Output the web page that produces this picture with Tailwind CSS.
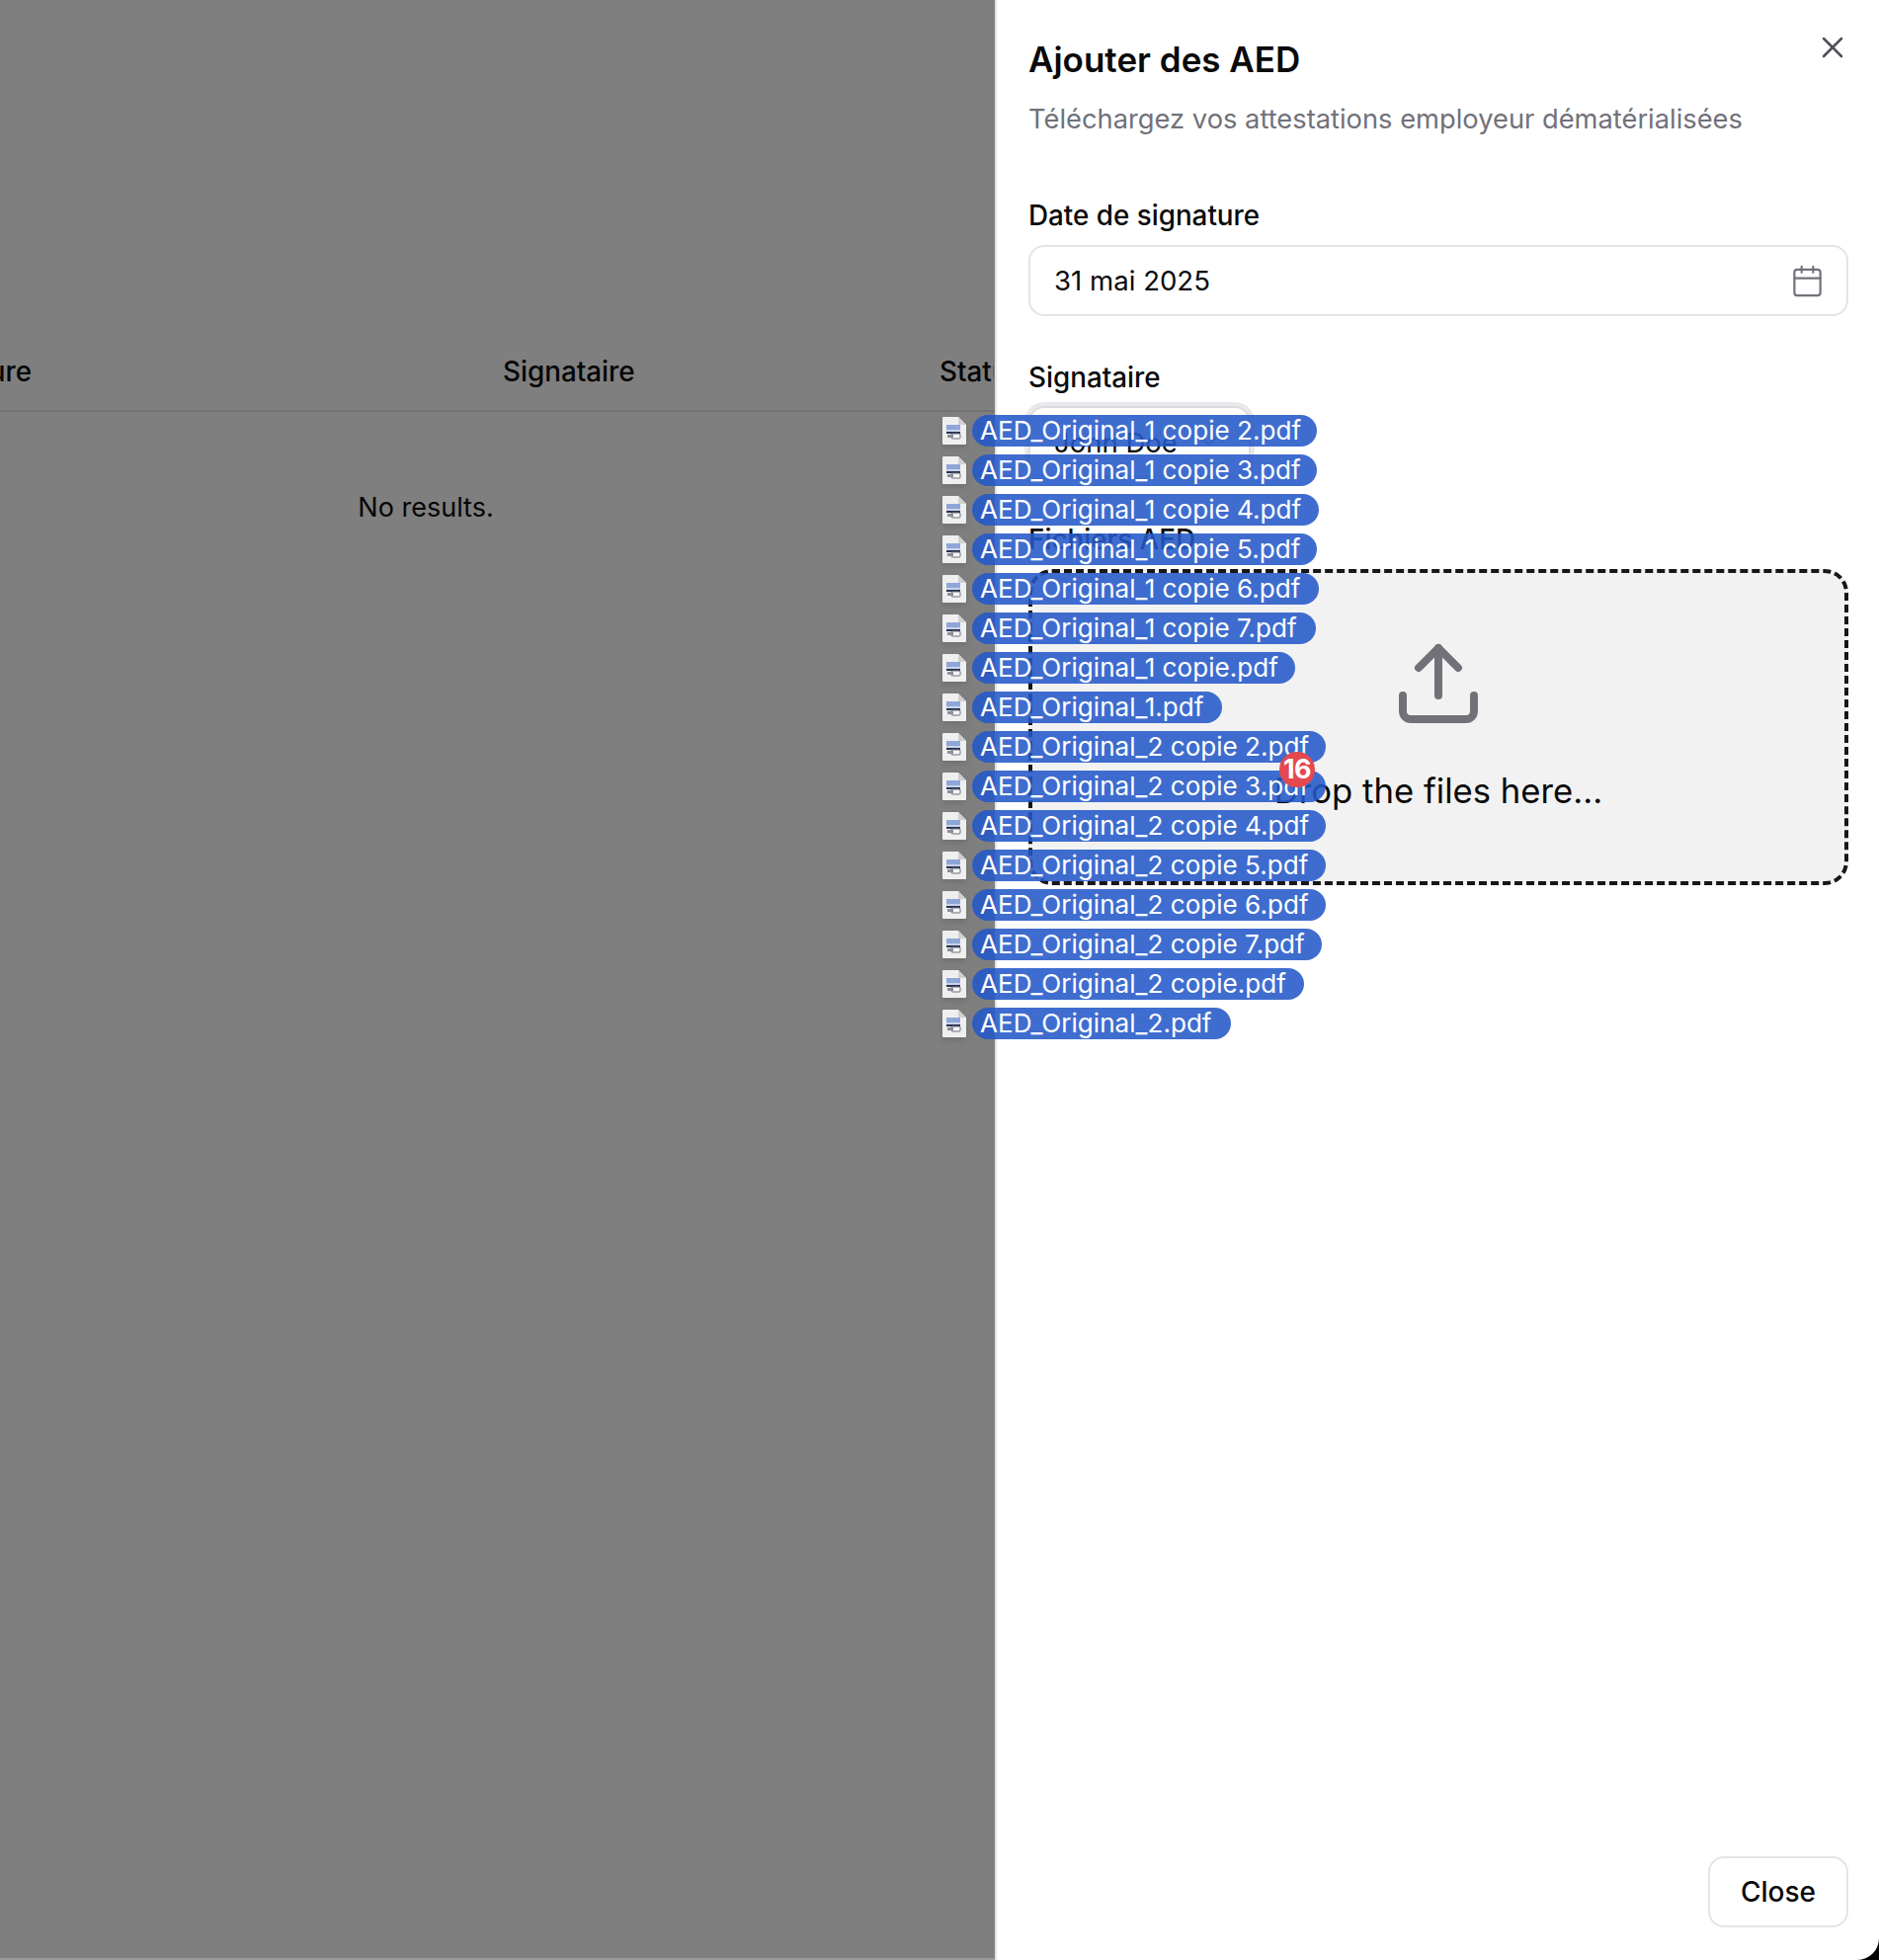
<!DOCTYPE html>
<html lang="fr">
<head>
<meta charset="utf-8">
<title>Ajouter des AED</title>
<script src="https://cdn.jsdelivr.net/npm/@tailwindcss/browser@4"></script>
</head>
<body class="font-['Inter','Liberation_Sans',sans-serif] bg-white">
<div class="relative w-[1902px] h-[1984px] overflow-hidden bg-[#7f7f7f] text-[#050505]">
  <!-- background table -->
  <div class="flex w-[1007px] h-[417px] items-end border-b-2 border-[#737373] pb-[23px] text-[27.8px] leading-[32px] font-medium whitespace-nowrap">
    <span class="w-[509px] shrink-0 -indent-[202px]">Date de signature</span>
    <span class="w-[442px] shrink-0">Signataire</span>
    <span class="w-[55px] shrink-0 overflow-hidden">Statut</span>
  </div>
  <div class="w-[862px] pt-[80px] text-center text-[27px] leading-[34px]">No results.</div>
  <div class="absolute left-0 bottom-0 w-[1007px] h-[2px] bg-[#9a9a9a]"></div>

  <!-- drawer -->
  <div class="absolute top-0 right-0 bottom-0 w-[895px] bg-white border-l-2 border-[#e4e4e7] flex flex-col pl-[32px] pr-[31px] text-[#0a0a0a]">
    <svg class="absolute top-[30px] right-[29px]" width="36" height="36" viewBox="0 0 24 24" fill="none" stroke="#4f4f55" stroke-width="1.7" stroke-linecap="round" stroke-linejoin="round"><path d="M18 6 6 18"/><path d="m6 6 12 12"/></svg>
    <h2 class="mt-[39px] text-[35px] leading-[42px] font-semibold">Ajouter des AED</h2>
    <p class="mt-[22px] text-[27.3px] leading-[36px] text-[#71717a]">Téléchargez vos attestations employeur dématérialisées</p>
    <label class="mt-[61px] text-[27.8px] leading-[36px] font-medium">Date de signature</label>
    <div class="mt-[12px] h-[72px] shrink-0 border-2 border-[#e4e4e7] rounded-[16px] flex items-center justify-between pl-[24px] pr-[22px]">
      <span class="text-[27.6px] pt-[1px]">31 mai 2025</span>
      <svg width="35" height="35" viewBox="0 0 24 24" fill="none" stroke="#71717a" stroke-width="1.5" stroke-linecap="round" stroke-linejoin="round"><path d="M8 2v4"/><path d="M16 2v4"/><rect width="18" height="18" x="3" y="4" rx="2"/><path d="M3 10h18"/></svg>
    </div>
    <label class="mt-[44px] text-[27.8px] leading-[36px] font-medium">Signataire</label>
    <div class="mt-[11px] w-[225px] h-[72px] shrink-0 border-2 border-[#dcdce0] rounded-[16px] ring-[4px] ring-[#e9e9ec] flex items-center justify-between pl-[24px] pr-[28px]">
      <span class="text-[27.5px] pt-[4px]">John Doe</span>
      <svg width="24" height="24" viewBox="0 0 24 24" fill="none" stroke="#a1a1aa" stroke-width="2" stroke-linecap="round" stroke-linejoin="round"><path d="m6 9 6 6 6-6"/></svg>
    </div>
    <label class="mt-[45px] text-[27.8px] leading-[36px] font-medium">Fichiers AED</label>
    <div class="mt-[12px] h-[320px] shrink-0 border-[4px] border-dashed border-[#171717] rounded-[24px] bg-[#f2f2f2] flex flex-col items-center pt-[64px]">
      <svg width="96" height="96" viewBox="0 0 24 24" fill="none" stroke="#71717a" stroke-width="2" stroke-linecap="round" stroke-linejoin="round"><path d="M21 15v4a2 2 0 0 1-2 2H5a2 2 0 0 1-2-2v-4"/><polyline points="17 8 12 3 7 8"/><line x1="12" x2="12" y1="3" y2="15"/></svg>
      <p class="mt-[38px] text-[34.7px] leading-[44px]">Drop the files here...</p>
    </div>
    <button class="mt-auto mb-[33px] self-end w-[142px] h-[72px] border-2 border-[#e4e4e7] rounded-[16px] bg-white text-[28px] font-medium">Close</button>
  </div>
  <div class="absolute right-0 bottom-0 w-[22px] h-[22px] bg-black [clip-path:path('M22_0A22_22_0_0_1_0_22H22Z')]"></div>

  <!-- drag ghost -->
  <div class="absolute left-[954px] top-[420px] flex flex-col gap-[8px] text-white text-[26.1px] leading-[31px]">
    <div class="flex items-center h-[32px]"><svg class="mr-[6px] drop-shadow-md" width="24" height="28" viewBox="0 0 24 28"><path d="M1 0h15l8 8v19a1 1 0 0 1-1 1H1a1 1 0 0 1-1-1V1a1 1 0 0 1 1-1z" fill="#efefef"/><path d="M16 0l8 8h-8z" fill="#d0d0d0"/><rect x="4" y="8" width="14" height="5" fill="#8fa6d8"/><rect x="4" y="13" width="14" height="2" fill="#c9d4ec"/><rect x="4" y="15" width="14" height="2" fill="#2a3350"/><rect x="9" y="17" width="9" height="5" rx="1" fill="#f5f5f5" stroke="#6b7080"/><rect x="5" y="18" width="6" height="3" fill="#8a8f99"/></svg><div class="w-[349px] h-[32px] rounded-full bg-[#2459c8]/88 pl-[8px] whitespace-nowrap">AED_Original_1 copie 2.pdf</div></div>
    <div class="flex items-center h-[32px]"><svg class="mr-[6px] drop-shadow-md" width="24" height="28" viewBox="0 0 24 28"><path d="M1 0h15l8 8v19a1 1 0 0 1-1 1H1a1 1 0 0 1-1-1V1a1 1 0 0 1 1-1z" fill="#efefef"/><path d="M16 0l8 8h-8z" fill="#d0d0d0"/><rect x="4" y="8" width="14" height="5" fill="#8fa6d8"/><rect x="4" y="13" width="14" height="2" fill="#c9d4ec"/><rect x="4" y="15" width="14" height="2" fill="#2a3350"/><rect x="9" y="17" width="9" height="5" rx="1" fill="#f5f5f5" stroke="#6b7080"/><rect x="5" y="18" width="6" height="3" fill="#8a8f99"/></svg><div class="w-[349px] h-[32px] rounded-full bg-[#2459c8]/88 pl-[8px] whitespace-nowrap">AED_Original_1 copie 3.pdf</div></div>
    <div class="flex items-center h-[32px]"><svg class="mr-[6px] drop-shadow-md" width="24" height="28" viewBox="0 0 24 28"><path d="M1 0h15l8 8v19a1 1 0 0 1-1 1H1a1 1 0 0 1-1-1V1a1 1 0 0 1 1-1z" fill="#efefef"/><path d="M16 0l8 8h-8z" fill="#d0d0d0"/><rect x="4" y="8" width="14" height="5" fill="#8fa6d8"/><rect x="4" y="13" width="14" height="2" fill="#c9d4ec"/><rect x="4" y="15" width="14" height="2" fill="#2a3350"/><rect x="9" y="17" width="9" height="5" rx="1" fill="#f5f5f5" stroke="#6b7080"/><rect x="5" y="18" width="6" height="3" fill="#8a8f99"/></svg><div class="w-[351px] h-[32px] rounded-full bg-[#2459c8]/88 pl-[8px] whitespace-nowrap">AED_Original_1 copie 4.pdf</div></div>
    <div class="flex items-center h-[32px]"><svg class="mr-[6px] drop-shadow-md" width="24" height="28" viewBox="0 0 24 28"><path d="M1 0h15l8 8v19a1 1 0 0 1-1 1H1a1 1 0 0 1-1-1V1a1 1 0 0 1 1-1z" fill="#efefef"/><path d="M16 0l8 8h-8z" fill="#d0d0d0"/><rect x="4" y="8" width="14" height="5" fill="#8fa6d8"/><rect x="4" y="13" width="14" height="2" fill="#c9d4ec"/><rect x="4" y="15" width="14" height="2" fill="#2a3350"/><rect x="9" y="17" width="9" height="5" rx="1" fill="#f5f5f5" stroke="#6b7080"/><rect x="5" y="18" width="6" height="3" fill="#8a8f99"/></svg><div class="w-[349px] h-[32px] rounded-full bg-[#2459c8]/88 pl-[8px] whitespace-nowrap">AED_Original_1 copie 5.pdf</div></div>
    <div class="flex items-center h-[32px]"><svg class="mr-[6px] drop-shadow-md" width="24" height="28" viewBox="0 0 24 28"><path d="M1 0h15l8 8v19a1 1 0 0 1-1 1H1a1 1 0 0 1-1-1V1a1 1 0 0 1 1-1z" fill="#efefef"/><path d="M16 0l8 8h-8z" fill="#d0d0d0"/><rect x="4" y="8" width="14" height="5" fill="#8fa6d8"/><rect x="4" y="13" width="14" height="2" fill="#c9d4ec"/><rect x="4" y="15" width="14" height="2" fill="#2a3350"/><rect x="9" y="17" width="9" height="5" rx="1" fill="#f5f5f5" stroke="#6b7080"/><rect x="5" y="18" width="6" height="3" fill="#8a8f99"/></svg><div class="w-[351px] h-[32px] rounded-full bg-[#2459c8]/88 pl-[8px] whitespace-nowrap">AED_Original_1 copie 6.pdf</div></div>
    <div class="flex items-center h-[32px]"><svg class="mr-[6px] drop-shadow-md" width="24" height="28" viewBox="0 0 24 28"><path d="M1 0h15l8 8v19a1 1 0 0 1-1 1H1a1 1 0 0 1-1-1V1a1 1 0 0 1 1-1z" fill="#efefef"/><path d="M16 0l8 8h-8z" fill="#d0d0d0"/><rect x="4" y="8" width="14" height="5" fill="#8fa6d8"/><rect x="4" y="13" width="14" height="2" fill="#c9d4ec"/><rect x="4" y="15" width="14" height="2" fill="#2a3350"/><rect x="9" y="17" width="9" height="5" rx="1" fill="#f5f5f5" stroke="#6b7080"/><rect x="5" y="18" width="6" height="3" fill="#8a8f99"/></svg><div class="w-[348px] h-[32px] rounded-full bg-[#2459c8]/88 pl-[8px] whitespace-nowrap">AED_Original_1 copie 7.pdf</div></div>
    <div class="flex items-center h-[32px]"><svg class="mr-[6px] drop-shadow-md" width="24" height="28" viewBox="0 0 24 28"><path d="M1 0h15l8 8v19a1 1 0 0 1-1 1H1a1 1 0 0 1-1-1V1a1 1 0 0 1 1-1z" fill="#efefef"/><path d="M16 0l8 8h-8z" fill="#d0d0d0"/><rect x="4" y="8" width="14" height="5" fill="#8fa6d8"/><rect x="4" y="13" width="14" height="2" fill="#c9d4ec"/><rect x="4" y="15" width="14" height="2" fill="#2a3350"/><rect x="9" y="17" width="9" height="5" rx="1" fill="#f5f5f5" stroke="#6b7080"/><rect x="5" y="18" width="6" height="3" fill="#8a8f99"/></svg><div class="w-[327px] h-[32px] rounded-full bg-[#2459c8]/88 pl-[8px] whitespace-nowrap">AED_Original_1 copie.pdf</div></div>
    <div class="flex items-center h-[32px]"><svg class="mr-[6px] drop-shadow-md" width="24" height="28" viewBox="0 0 24 28"><path d="M1 0h15l8 8v19a1 1 0 0 1-1 1H1a1 1 0 0 1-1-1V1a1 1 0 0 1 1-1z" fill="#efefef"/><path d="M16 0l8 8h-8z" fill="#d0d0d0"/><rect x="4" y="8" width="14" height="5" fill="#8fa6d8"/><rect x="4" y="13" width="14" height="2" fill="#c9d4ec"/><rect x="4" y="15" width="14" height="2" fill="#2a3350"/><rect x="9" y="17" width="9" height="5" rx="1" fill="#f5f5f5" stroke="#6b7080"/><rect x="5" y="18" width="6" height="3" fill="#8a8f99"/></svg><div class="w-[253px] h-[32px] rounded-full bg-[#2459c8]/88 pl-[8px] whitespace-nowrap">AED_Original_1.pdf</div></div>
    <div class="flex items-center h-[32px]"><svg class="mr-[6px] drop-shadow-md" width="24" height="28" viewBox="0 0 24 28"><path d="M1 0h15l8 8v19a1 1 0 0 1-1 1H1a1 1 0 0 1-1-1V1a1 1 0 0 1 1-1z" fill="#efefef"/><path d="M16 0l8 8h-8z" fill="#d0d0d0"/><rect x="4" y="8" width="14" height="5" fill="#8fa6d8"/><rect x="4" y="13" width="14" height="2" fill="#c9d4ec"/><rect x="4" y="15" width="14" height="2" fill="#2a3350"/><rect x="9" y="17" width="9" height="5" rx="1" fill="#f5f5f5" stroke="#6b7080"/><rect x="5" y="18" width="6" height="3" fill="#8a8f99"/></svg><div class="w-[358px] h-[32px] rounded-full bg-[#2459c8]/88 pl-[8px] whitespace-nowrap">AED_Original_2 copie 2.pdf</div></div>
    <div class="flex items-center h-[32px]"><svg class="mr-[6px] drop-shadow-md" width="24" height="28" viewBox="0 0 24 28"><path d="M1 0h15l8 8v19a1 1 0 0 1-1 1H1a1 1 0 0 1-1-1V1a1 1 0 0 1 1-1z" fill="#efefef"/><path d="M16 0l8 8h-8z" fill="#d0d0d0"/><rect x="4" y="8" width="14" height="5" fill="#8fa6d8"/><rect x="4" y="13" width="14" height="2" fill="#c9d4ec"/><rect x="4" y="15" width="14" height="2" fill="#2a3350"/><rect x="9" y="17" width="9" height="5" rx="1" fill="#f5f5f5" stroke="#6b7080"/><rect x="5" y="18" width="6" height="3" fill="#8a8f99"/></svg><div class="w-[358px] h-[32px] rounded-full bg-[#2459c8]/88 pl-[8px] whitespace-nowrap">AED_Original_2 copie 3.pdf</div></div>
    <div class="flex items-center h-[32px]"><svg class="mr-[6px] drop-shadow-md" width="24" height="28" viewBox="0 0 24 28"><path d="M1 0h15l8 8v19a1 1 0 0 1-1 1H1a1 1 0 0 1-1-1V1a1 1 0 0 1 1-1z" fill="#efefef"/><path d="M16 0l8 8h-8z" fill="#d0d0d0"/><rect x="4" y="8" width="14" height="5" fill="#8fa6d8"/><rect x="4" y="13" width="14" height="2" fill="#c9d4ec"/><rect x="4" y="15" width="14" height="2" fill="#2a3350"/><rect x="9" y="17" width="9" height="5" rx="1" fill="#f5f5f5" stroke="#6b7080"/><rect x="5" y="18" width="6" height="3" fill="#8a8f99"/></svg><div class="w-[358px] h-[32px] rounded-full bg-[#2459c8]/88 pl-[8px] whitespace-nowrap">AED_Original_2 copie 4.pdf</div></div>
    <div class="flex items-center h-[32px]"><svg class="mr-[6px] drop-shadow-md" width="24" height="28" viewBox="0 0 24 28"><path d="M1 0h15l8 8v19a1 1 0 0 1-1 1H1a1 1 0 0 1-1-1V1a1 1 0 0 1 1-1z" fill="#efefef"/><path d="M16 0l8 8h-8z" fill="#d0d0d0"/><rect x="4" y="8" width="14" height="5" fill="#8fa6d8"/><rect x="4" y="13" width="14" height="2" fill="#c9d4ec"/><rect x="4" y="15" width="14" height="2" fill="#2a3350"/><rect x="9" y="17" width="9" height="5" rx="1" fill="#f5f5f5" stroke="#6b7080"/><rect x="5" y="18" width="6" height="3" fill="#8a8f99"/></svg><div class="w-[358px] h-[32px] rounded-full bg-[#2459c8]/88 pl-[8px] whitespace-nowrap">AED_Original_2 copie 5.pdf</div></div>
    <div class="flex items-center h-[32px]"><svg class="mr-[6px] drop-shadow-md" width="24" height="28" viewBox="0 0 24 28"><path d="M1 0h15l8 8v19a1 1 0 0 1-1 1H1a1 1 0 0 1-1-1V1a1 1 0 0 1 1-1z" fill="#efefef"/><path d="M16 0l8 8h-8z" fill="#d0d0d0"/><rect x="4" y="8" width="14" height="5" fill="#8fa6d8"/><rect x="4" y="13" width="14" height="2" fill="#c9d4ec"/><rect x="4" y="15" width="14" height="2" fill="#2a3350"/><rect x="9" y="17" width="9" height="5" rx="1" fill="#f5f5f5" stroke="#6b7080"/><rect x="5" y="18" width="6" height="3" fill="#8a8f99"/></svg><div class="w-[358px] h-[32px] rounded-full bg-[#2459c8]/88 pl-[8px] whitespace-nowrap">AED_Original_2 copie 6.pdf</div></div>
    <div class="flex items-center h-[32px]"><svg class="mr-[6px] drop-shadow-md" width="24" height="28" viewBox="0 0 24 28"><path d="M1 0h15l8 8v19a1 1 0 0 1-1 1H1a1 1 0 0 1-1-1V1a1 1 0 0 1 1-1z" fill="#efefef"/><path d="M16 0l8 8h-8z" fill="#d0d0d0"/><rect x="4" y="8" width="14" height="5" fill="#8fa6d8"/><rect x="4" y="13" width="14" height="2" fill="#c9d4ec"/><rect x="4" y="15" width="14" height="2" fill="#2a3350"/><rect x="9" y="17" width="9" height="5" rx="1" fill="#f5f5f5" stroke="#6b7080"/><rect x="5" y="18" width="6" height="3" fill="#8a8f99"/></svg><div class="w-[354px] h-[32px] rounded-full bg-[#2459c8]/88 pl-[8px] whitespace-nowrap">AED_Original_2 copie 7.pdf</div></div>
    <div class="flex items-center h-[32px]"><svg class="mr-[6px] drop-shadow-md" width="24" height="28" viewBox="0 0 24 28"><path d="M1 0h15l8 8v19a1 1 0 0 1-1 1H1a1 1 0 0 1-1-1V1a1 1 0 0 1 1-1z" fill="#efefef"/><path d="M16 0l8 8h-8z" fill="#d0d0d0"/><rect x="4" y="8" width="14" height="5" fill="#8fa6d8"/><rect x="4" y="13" width="14" height="2" fill="#c9d4ec"/><rect x="4" y="15" width="14" height="2" fill="#2a3350"/><rect x="9" y="17" width="9" height="5" rx="1" fill="#f5f5f5" stroke="#6b7080"/><rect x="5" y="18" width="6" height="3" fill="#8a8f99"/></svg><div class="w-[336px] h-[32px] rounded-full bg-[#2459c8]/88 pl-[8px] whitespace-nowrap">AED_Original_2 copie.pdf</div></div>
    <div class="flex items-center h-[32px]"><svg class="mr-[6px] drop-shadow-md" width="24" height="28" viewBox="0 0 24 28"><path d="M1 0h15l8 8v19a1 1 0 0 1-1 1H1a1 1 0 0 1-1-1V1a1 1 0 0 1 1-1z" fill="#efefef"/><path d="M16 0l8 8h-8z" fill="#d0d0d0"/><rect x="4" y="8" width="14" height="5" fill="#8fa6d8"/><rect x="4" y="13" width="14" height="2" fill="#c9d4ec"/><rect x="4" y="15" width="14" height="2" fill="#2a3350"/><rect x="9" y="17" width="9" height="5" rx="1" fill="#f5f5f5" stroke="#6b7080"/><rect x="5" y="18" width="6" height="3" fill="#8a8f99"/></svg><div class="w-[262px] h-[32px] rounded-full bg-[#2459c8]/88 pl-[8px] whitespace-nowrap">AED_Original_2.pdf</div></div>
  </div>
  <div class="absolute left-[1295px] top-[761px] w-[36px] h-[36px] rounded-full bg-[#e5484d] text-white text-[27px] tracking-[-0.5px] font-bold flex items-center justify-center">16</div>
</div>
</body>
</html>
